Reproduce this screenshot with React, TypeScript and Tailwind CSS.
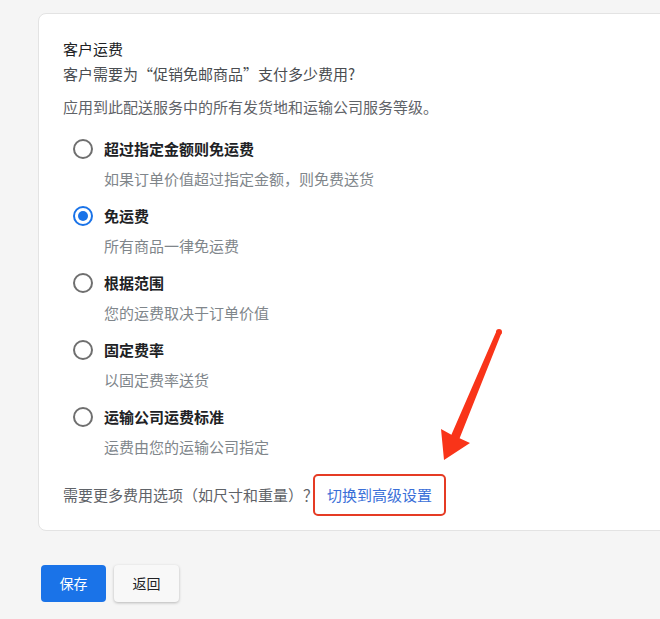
import React from "react";

const options = [
  { title: "超过指定金额则免运费", desc: "如果订单价值超过指定金额，则免费送货" },
  { title: "免运费", desc: "所有商品一律免运费" },
  { title: "根据范围", desc: "您的运费取决于订单价值" },
  { title: "固定费率", desc: "以固定费率送货" },
  { title: "运输公司运费标准", desc: "运费由您的运输公司指定" },
];

function Radio({ checked }: { checked: boolean }) {
  if (checked) {
    return (
      <span className="w-5 h-5 rounded-full border-2 border-[#1a73e8] flex items-center justify-center shrink-0">
        <span className="w-[10px] h-[10px] rounded-full bg-[#1a73e8]" />
      </span>
    );
  }
  return <span className="w-5 h-5 rounded-full border-2 border-[#6f6f6f] shrink-0" />;
}

export default function App() {
  const selected = 1;

  return (
    <div
      className="relative min-h-screen w-full overflow-hidden bg-[#f5f5f5] pt-[13px]"
      style={{ fontFamily: '"Noto Sans CJK SC", "Noto Sans", sans-serif' }}
    >
      {/* card */}
      <div className="ml-[38px] w-[650px] bg-white border border-[#e3e3e3] rounded-lg pl-[24px] pt-[24px] pb-[14px]">
        <div className="text-[15px] leading-[22px] text-[#202124]">客户运费</div>
        <div className="mt-[3px] text-[15px] leading-[22px] text-[#4a4d51]">
          客户需要为“促销免邮商品”支付多少费用?
        </div>
        <div className="mt-[11px] text-[15px] leading-[22px] text-[#5f6368]">
          应用到此配送服务中的所有发货地和运输公司服务等级。
        </div>

        <div className="mt-[20px] flex flex-col gap-[15px]">
          {options.map((o, i) => (
            <div key={o.title}>
              <div className="flex items-center h-[22px] pl-[10px]">
                <Radio checked={i === selected} />
                <span className="ml-[11px] text-[15px] leading-[22px] font-bold text-[#202124]">{o.title}</span>
              </div>
              <div className="mt-[8px] pl-[41px] text-[15px] leading-[22px] text-[#80868b]">{o.desc}</div>
            </div>
          ))}
        </div>

        <div className="mt-[16px] flex items-center text-[15px] leading-[22px]">
          <span className="text-[#5f6368]">需要更多费用选项（如尺寸和重量）？</span>
          <a className="-ml-[5px] px-[12px] py-[8px] border-2 border-[#e53b24] rounded-[5px] text-[#3a6fd8]">
            切换到高级设置
          </a>
        </div>
      </div>

      {/* actions */}
      <div className="ml-[41px] mt-[34px] flex gap-[8px]">
        <button className="w-[65px] h-[37px] rounded-[4px] bg-[#1a73e8] text-white text-[14px]">保存</button>
        <button className="w-[65px] h-[37px] rounded-[4px] bg-[#f8f8f8] text-[#202124] text-[14px] shadow-[0_1px_3px_rgba(0,0,0,0.25)]">
          返回
        </button>
      </div>

      {/* annotation arrow */}
      <svg className="absolute left-0 top-0 pointer-events-none" width="660" height="619">
        <circle cx="499" cy="332" r="3" fill="#f93419" />
        <polygon
          points="501.5,333 459.6,438.3 470,443 444,460 441,429 451.4,434.7 496.5,331"
          fill="#f93419"
        />
      </svg>
    </div>
  );
}
